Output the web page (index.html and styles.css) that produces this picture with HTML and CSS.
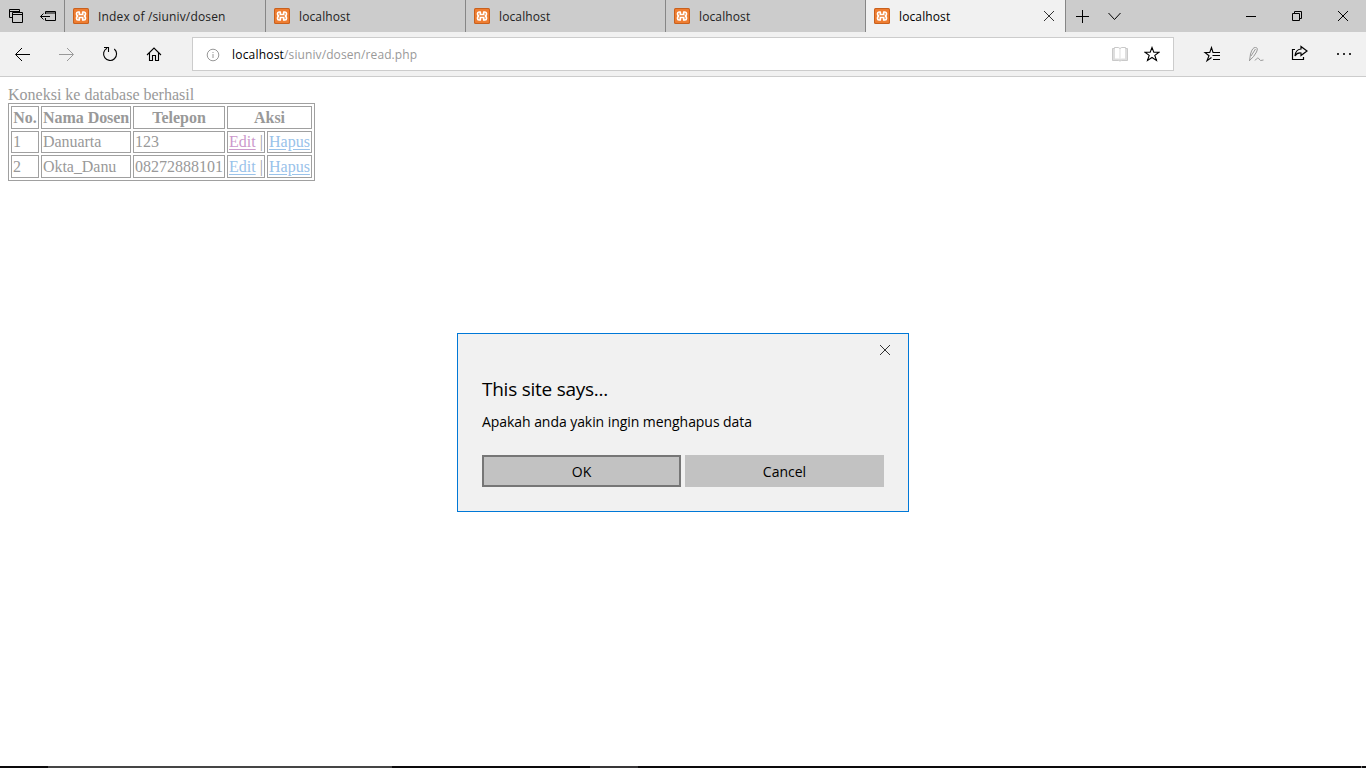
FILE: index.html
```html
<!DOCTYPE html>
<html lang="id">
<head>
<meta charset="utf-8">
<title>localhost</title>
<link rel="stylesheet" href="styles.css">
</head>
<body>
<svg width="0" height="0" class="defs">
  <symbol id="xampp" viewBox="0 0 16 16">
    <rect width="16" height="16" rx="1.5" fill="#c9601c"/>
    <rect x="1" y="1" width="14" height="14" rx="1" fill="#ee7d31"/>
    <path d="M5 4H6.300V6.500H9.700V4H11Q12.500 4 12.500 5.700Q12.500 7.200 11.400 8Q12.500 8.800 12.500 10.300Q12.500 12 11 12H9.700V9.500H6.300V12H5Q3.500 12 3.500 10.300Q3.500 8.800 4.600 8Q3.500 7.200 3.500 5.700Q3.500 4 5 4Z" fill="none" stroke="#fff" stroke-width="1.700" stroke-linejoin="round"/>
  </symbol>
  <symbol id="cross" viewBox="0 0 12 12"><path d="M1 1L11 11M11 1L1 11" fill="none" stroke="currentColor" stroke-width="1"/></symbol>
</svg>
<div class="browser">
  <header class="tabs">
    <div class="tab-tools">
      <svg width="32" height="32" viewBox="0 0 32 32"><path d="M9.500 9.500H19.500V12M9.500 9.500V17.500H12M9.500 11.500H19M12.500 12.500H22.500V22.500H12.500ZM12.500 14.500H22.500"/></svg>
      <svg width="32" height="32" viewBox="0 0 32 32"><path d="M13.500 14V11.500H23.500V20.500H13.500V18M13.500 13H23.500M8.500 16.500H18M11.500 13.500L8.500 16.500L11.500 19.500"/></svg>
    </div>
    <div class="tab first"><svg class="fav"><use href="#xampp"/></svg><span class="tab-index">Index of /siuniv/dosen</span></div>
    <div class="tab"><svg class="fav"><use href="#xampp"/></svg><span>localhost</span></div>
    <div class="tab"><svg class="fav"><use href="#xampp"/></svg><span>localhost</span></div>
    <div class="tab"><svg class="fav"><use href="#xampp"/></svg><span>localhost</span></div>
    <div class="tab active"><svg class="fav"><use href="#xampp"/></svg><span>localhost</span><svg class="close" width="12" height="12"><use href="#cross"/></svg></div>
    <div class="new-tab">
      <svg width="32" height="32" viewBox="0 0 32 32"><path d="M10 16.500H23M16.500 10V23"/></svg>
      <svg width="32" height="32" viewBox="0 0 32 32"><path d="M10.500 13L16.500 19.500L22.500 13"/></svg>
    </div>
    <div class="window-buttons">
      <svg width="46" height="32" viewBox="0 0 46 32"><path d="M18 16.500H28"/></svg>
      <svg width="46" height="32" viewBox="0 0 46 32"><path d="M18.500 13.500H25.500V20.500H18.500ZM20.500 13.500V11.500H27.500V18.500H25.500"/></svg>
      <svg width="46" height="32" viewBox="0 0 46 32"><path d="M18 11L28 21M28 11L18 21"/></svg>
    </div>
  </header>
  <nav class="toolbar">
    <div class="nav-buttons">
      <svg width="44" height="44" viewBox="0 0 44 44"><path d="M30 22.500H16M22 16L15.500 22.500L22 29"/></svg>
      <svg class="muted" width="44" height="44" viewBox="0 0 44 44"><path d="M15 22.500H29M23 16L29.500 22.500L23 29"/></svg>
      <svg width="44" height="44" viewBox="0 0 44 44"><path d="M26.300 17A6.500 6.500 0 1 1 19 16.200M16 15.500H20.500V20" stroke-width="1.100"/></svg>
      <svg width="44" height="44" viewBox="0 0 44 44"><path d="M15 23L22 16L29 23M17.500 21V28.500H20.500V23.500H23.500V28.500H26.500V21" stroke-width="1.100"/></svg>
    </div>
    <div class="address">
      <svg class="info" width="14" height="14" viewBox="0 0 14 14"><circle cx="7" cy="7" r="5.800"/><path d="M7 6V10M7 4V5"/></svg>
      <span class="url"><b>localhost</b>/siuniv/dosen/read.php</span>
      <svg class="book" width="16" height="16" viewBox="0 0 16 16"><path d="M.5 2.500H2.500V1.500H6.500L8 2.500L9.500 1.500H13.500V2.500H15.500V14.500H9.500L8 15L6.500 14.500H.5Z" fill="#dedede"/><path d="M3 2H6.500L7.500 3V13L6.500 12.500H3ZM13 2H9.500L8.500 3V13L9.500 12.500H13Z" fill="#fff" stroke="none"/></svg>
      <svg class="star" width="16" height="16" viewBox="0 0 16 16"><path d="M8 1.500L9.800 6.300H15L10.800 9.400L12.500 14.500L8 11.500L3.500 14.500L5.200 9.400L1 6.300H6.200Z" stroke-width="1.100"/></svg>
    </div>
    <div class="actions">
      <svg width="44" height="44" viewBox="0 0 44 44"><path d="M24 20.500H23L21.500 15.500L19.800 20.500H15L19 23.700L17 28.800L21.500 25.500M23 20.500H30M22.500 23.500H30M23 27.500H30" stroke-width="1.100"/></svg>
      <svg class="muted" width="44" height="44" viewBox="0 0 44 44"><path d="M15.500 29L16.500 22Q18.500 15 21.500 15.500Q24.500 15.500 22.500 20Q20 25 15.500 28.500M17 24L21.500 17M21 28.500Q24 24.500 25 27Q26 29.500 29.500 28"/></svg>
      <svg width="44" height="44" viewBox="0 0 44 44"><path d="M17 17.500H14.500V27.500H25.500V25M23 14.500L29 19L23 23.500V21Q19 20.500 17 24Q17.500 17.500 23 17Z" stroke-width="1.200"/></svg>
      <svg width="44" height="44" viewBox="0 0 44 44"><path d="M15 22H17M21 22H23M27 22H29" stroke-width="2" stroke="#333"/></svg>
    </div>
  </nav>
  <main class="page">
    <div class="message">Koneksi ke database berhasil</div>
    <table>
      <colgroup><col class="c-no"><col class="c-name"><col class="c-tel"><col class="c-edit"><col class="c-del"></colgroup>
      <tr><th>No.</th><th>Nama Dosen</th><th>Telepon</th><th colspan="2">Aksi</th></tr>
      <tr class="short"><td>1</td><td>Danuarta</td><td>123</td><td><a class="visited">Edit</a> |</td><td><a>Hapus</a></td></tr>
      <tr><td>2</td><td>Okta_Danu</td><td>08272888101</td><td><a>Edit</a> |</td><td><a>Hapus</a></td></tr>
    </table>
  </main>
  <footer class="taskbar"><i class="gap-a"></i><i class="run-a"></i><i class="gap-b"></i><i class="run-b"></i><i class="peek"></i></footer>
</div>
<div class="dialog">
  <svg class="dismiss" width="12" height="12"><use href="#cross"/></svg>
  <h1>This site says...</h1>
  <p>Apakah anda yakin ingin menghapus data</p>
  <div class="buttons"><button class="ok">OK</button><button>Cancel</button></div>
</div>
</body>
</html>
```

FILE: styles.css
```css
* { box-sizing: border-box; }
body { margin: 0; background: #fff; font-family: "Open Sans", "Noto Sans", sans-serif; overflow: hidden; }
.defs { position: absolute; }
svg { flex: none; fill: none; stroke: #000; stroke-width: 1; }
svg symbol, .fav { stroke: none; }
.browser { display: flex; flex-direction: column; height: 768px; }
.tabs { display: flex; height: 32px; background: #ccc; font-size: 12px; color: #222; }
.tab-tools { display: flex; width: 64px; }
.tab { display: flex; align-items: center; width: 200px; padding-left: 8px; border-left: 1px solid #868686; white-space: nowrap; }
.tab.first { width: 201px; }
.tab span { margin-left: 9px; padding-top: 1px; line-height: 16px; letter-spacing: 0.12px; }
.tab .tab-index { letter-spacing: 0.15px; }
.fav { width: 16px; height: 16px; }
.tab.active { width: 201px; background: #f1f1f1; border-right: 1px solid #868686; color: #000; }
.close { margin-left: auto; margin-right: 10px; color: #333; }
.new-tab { display: flex; }
.window-buttons { display: flex; margin-left: auto; }
.toolbar { display: flex; align-items: center; height: 45px; background: #f1f1f1; border-bottom: 1px solid #ccc; }
.nav-buttons, .actions { display: flex; }
.nav-buttons { width: 192px; }
.muted, .info { stroke: #999; }
.address { display: flex; align-items: center; width: 982px; height: 34px; background: #fff; border: 1px solid #ccc; font-size: 12px; color: #999; }
.info { margin-left: 13px; margin-top: 1px; }
.url { margin-left: 12px; letter-spacing: 0.1px; }
.url b { font-weight: 400; color: #000; letter-spacing: 0.2px; }
.book { margin-left: auto; stroke: #c9c9c9; }
.star { margin: 0 13px 0 16px; }
.actions { margin-left: 16px; }
.page { flex: 1; padding: 9px 8px 0; font: 16px/18px "Liberation Serif", serif; color: #999; }
.message { height: 17px; }
table { width: 307px; table-layout: fixed; border: 1px solid #a0a0a0; border-spacing: 2px; }
tr { height: 23px; }
tr.short { height: 22px; }
th, td { padding: 1px; border: 1px solid #a0a0a0; white-space: nowrap; }
th:nth-child(2), td:nth-child(2) { letter-spacing: -0.05px; }
.c-no { width: 28px; }
.c-name { width: 90px; }
.c-tel { width: 92px; }
.c-edit { width: 38px; }
.c-del { width: 45px; }
a { color: #99c2ea; text-decoration: underline; text-underline-offset: 2px; }
a.visited { color: #cc99cc; }
.taskbar { display: flex; height: 2px; background: #0c0a0c; }
.gap-a { width: 48px; }
.run-a { width: 344px; background: #454545; }
.gap-b { width: 198px; }
.run-b { width: 48px; background: #383638; }
.peek { width: 1px; margin-left: auto; margin-right: 4px; background: #777; }
.dialog { position: absolute; left: 457px; top: 333px; width: 452px; height: 179px; padding: 0 24px; border: 1px solid #0078d7; background: #f1f1f1; color: #000; }
.dismiss { display: block; margin: 10px -7px 0 auto; color: #333; }
.dialog h1 { margin: 19px 0 0; font-size: 19px; line-height: 28px; font-weight: 400; letter-spacing: -0.25px; }
.dialog p { margin: 9px 0 0; font-size: 14px; line-height: 20px; letter-spacing: -0.06px; white-space: nowrap; }
.buttons { display: flex; gap: 4px; margin-top: 23px; }
button { width: 199px; height: 32px; padding: 0; border: 0; background: #c2c2c2; font: 14px "Open Sans", sans-serif; color: #000; }
button.ok { border: 2px solid #767676; }
```
